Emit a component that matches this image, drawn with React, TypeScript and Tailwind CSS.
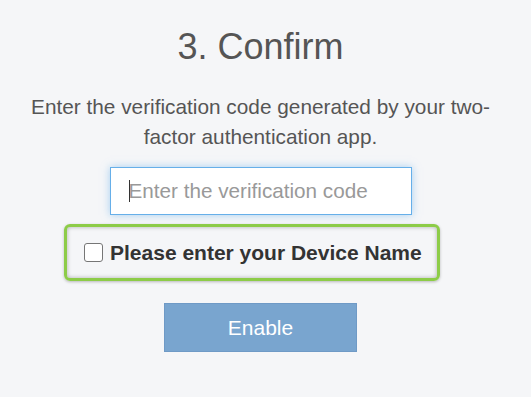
import { FC } from 'react';

const App: FC = () => {
  return (
    <div className="min-h-[397px] w-full bg-[#f5f6f8] font-['Liberation_Sans',Arial,sans-serif]">
      <div className="w-[521px] flex flex-col items-center">
        <h1 className="mt-[27px] text-[36px] leading-[40px] text-[#555]">3. Confirm</h1>
        <p className="mt-[25px] w-[481px] text-center text-[20.8px] leading-[30px] text-[#555]">
          Enter the verification code generated by your two-factor authentication app.
        </p>

        <div className="relative mt-[15px] w-[302px] h-[48px]">
          <input
            type="text"
            placeholder="Enter the verification code"
            className="w-full h-full bg-white border border-[#66afe9] pl-[18px] text-[20.7px] text-[#333] placeholder:text-[#999] outline-none shadow-[0_0_8px_rgba(102,175,233,0.55)]"
          />
          <span className="absolute left-[19px] top-[13px] h-[22px] w-px bg-[#333]" />
        </div>

        <div className="self-start ml-[64px] mt-[9px] w-[376px] h-[57px] rounded-[6px] border-[3px] border-[#8dcc48] flex items-center pl-[17px] gap-[7px] shadow-[0_1px_3px_rgba(0,0,0,0.25),inset_0_0_4px_rgba(0,0,0,0.3)]">
          <span className="w-[19px] h-[19px] rounded-[3px] border-[1.5px] border-[#767676] bg-white" />
          <span className="text-[21px] font-bold text-[#333]">Please enter your Device Name</span>
        </div>

        <button className="mt-[22px] w-[193px] h-[49px] bg-[#79a5cf] border border-[#6f9ac6] text-white text-[21px]">
          Enable
        </button>
      </div>
    </div>
  );
};

export default App;
